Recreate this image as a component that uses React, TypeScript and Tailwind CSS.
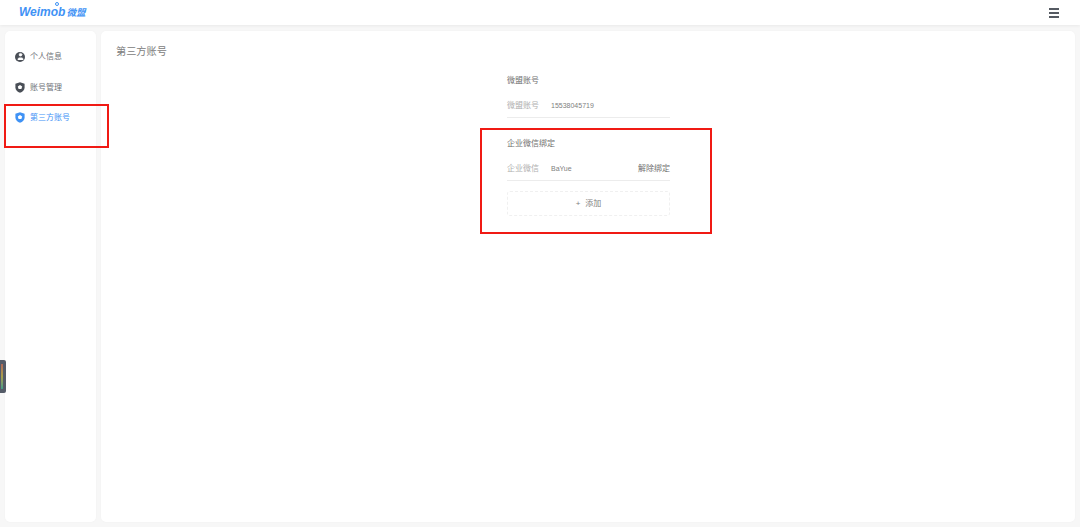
import { User } from "lucide-react";

const font = { fontFamily: '"Liberation Sans", "Noto Sans CJK SC", sans-serif' };

function ShieldIcon({ color }: { color: string }) {
  return (
    <svg width="10" height="11" viewBox="0 0 10 11">
      <path d="M5 .3 9.6 1.8V5.4C9.6 8 7.6 9.9 5 10.7 2.4 9.9.4 8 .4 5.4V1.8Z" fill={color} />
      <path d="M5 3 7.2 4.6 6.4 7H3.6L2.8 4.6Z" fill="#fff" />
    </svg>
  );
}

function ProfileIcon() {
  return (
    <span className="flex h-[10px] w-[10px] items-center justify-center overflow-hidden rounded-full bg-[#4a4f57]">
      <User size={9} color="#fff" fill="#fff" strokeWidth={1} />
    </span>
  );
}

function NavItem({ icon, label, active }: { icon: React.ReactNode; label: string; active?: boolean }) {
  return (
    <div className={`flex h-[11px] items-center gap-[5px] pl-[10px] text-[8px] leading-[11px] ${active ? "text-[#3f92f5]" : "text-[#6e7278]"}`}>
      {icon}
      <span>{label}</span>
    </div>
  );
}

function Row({ label, value, action }: { label: string; value: string; action?: string }) {
  return (
    <div className="flex h-[21px] items-start border-b border-[#ececec] pt-[3px] text-[8px] leading-[11px]">
      <span className="w-[44px] text-[#b0b0b0]">{label}</span>
      <span className="flex-1 text-[7px] text-[#808080]">{value}</span>
      {action ? <span className="text-[#707070]">{action}</span> : null}
    </div>
  );
}

export default function App() {
  return (
    <div className="relative flex h-[527px] w-[1080px] flex-col overflow-hidden bg-[#f7f7f7]" style={font}>
      <header className="flex h-[25px] shrink-0 items-center justify-between bg-white pl-[19px] pr-[21px] shadow-[0_1px_3px_rgba(0,0,0,0.06)]">
        <div className="relative flex items-baseline gap-[1px] italic text-[#3f92f5]">
          <span className="text-[12px] font-bold leading-[14px]">Weimob</span>
          <span className="text-[9.5px] font-bold leading-[14px]">微盟</span>
          <span className="absolute left-[36px] top-[-3px] h-[4px] w-[4px] rounded-full border border-[#3f92f5]" />
        </div>
        <div className="flex w-[10px] flex-col gap-[2px]">
          <span className="h-[2px] bg-[#555a62]" />
          <span className="h-[2px] bg-[#555a62]" />
          <span className="h-[2px] bg-[#555a62]" />
        </div>
      </header>

      <div className="flex flex-1 gap-[5px] px-[5px] pb-[5px] pt-[6px]">
        <aside className="flex w-[91px] flex-col gap-[19.5px] rounded-[5px] bg-white pt-[20px] shadow-[0_0_2px_rgba(0,0,0,0.04)]">
          <NavItem icon={<ProfileIcon />} label="个人信息" />
          <NavItem icon={<ShieldIcon color="#4a4f57" />} label="账号管理" />
          <NavItem icon={<ShieldIcon color="#3f92f5" />} label="第三方账号" active />
        </aside>

        <main className="flex-1 rounded-[5px] bg-white pl-[15px] pt-[14px] shadow-[0_0_2px_rgba(0,0,0,0.04)]">
          <h1 className="text-[10.2px] leading-[14px] text-[#808080]">第三方账号</h1>
          <div className="ml-[391px] mt-[16px] w-[163px]">
            <h2 className="text-[8px] leading-[11px] text-[#707070]">微盟账号</h2>
            <div className="mt-[11px]">
              <Row label="微盟账号" value="15538045719" />
            </div>
            <h2 className="mt-[20px] text-[8px] leading-[11px] text-[#707070]">企业微信绑定</h2>
            <div className="mt-[11px]">
              <Row label="企业微信" value="BaYue" action="解除绑定" />
            </div>
            <button
              type="button"
              className="mt-[10px] flex h-[25px] w-full items-center justify-center gap-[5px] rounded-[3px] border border-dashed border-[#f0f0f0] text-[8px] text-[#808080]"
            >
              <span>+</span>
              <span>添加</span>
            </button>
          </div>
        </main>
      </div>

      <div className="absolute left-0 top-[360px] flex h-[33px] w-[6px] items-center rounded-r-[2px] bg-[#555c68] pl-[1px]">
        <div className="h-[25px] w-[2px] bg-gradient-to-b from-[#b0695a] via-[#a8a04a] to-[#3f9c86]" />
      </div>
      <div className="absolute left-[4px] top-[104px] h-[44px] w-[105px] border-2 border-[#f01a14]" />
      <div className="absolute left-[480px] top-[128px] h-[106px] w-[232px] border-2 border-[#f01a14]" />
    </div>
  );
}
